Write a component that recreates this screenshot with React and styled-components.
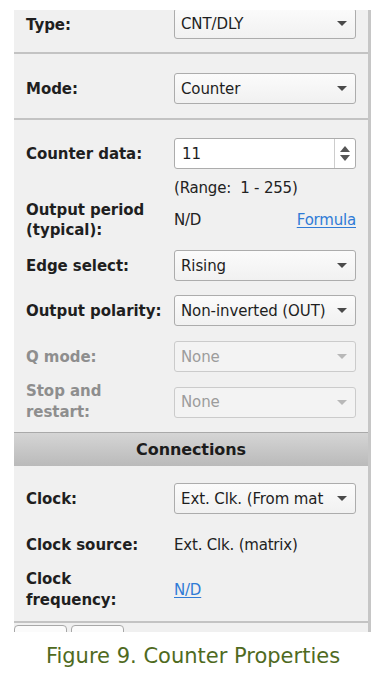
import React from "react";
import styled, { createGlobalStyle, css } from "styled-components";

const Global = createGlobalStyle`
  html, body { margin: 0; padding: 0; background: #ffffff; }
  body { width: 386px; height: 678px; overflow: hidden; font-family: "DejaVu Sans", Verdana, sans-serif; }
`;

const Page = styled.div`
  width: 386px;
  display: flex;
  flex-direction: column;
`;

const Frame = styled.div`
  margin-top: 10px;
  margin-left: 14px;
  width: 354px;
  border-right: 3px solid #c6c6c6;
  background: #f0f0f0;
  display: flex;
  flex-direction: column;
  overflow: hidden;
`;

const Section = styled.div`
  display: flex;
  flex-direction: column;
  padding: ${(p) => p.$pad || "0"};
  padding-left: 12px;
  padding-right: 12px;
  border-bottom: ${(p) => (p.$noline ? "none" : "2px solid #c3c3c3")};
`;

const Row = styled.div`
  display: grid;
  grid-template-columns: 148px 182px;
  align-items: center;
  margin-top: ${(p) => p.$mt || 0}px;
`;

const Label = styled.div`
  font-family: "DejaVu Sans", Verdana, sans-serif;
  font-weight: bold;
  font-size: 15px;
  line-height: ${(p) => p.$lh || 20}px;
  color: ${(p) => (p.$disabled ? "#8e8e8e" : "#1f1f1f")};
  letter-spacing: -0.05px;
`;

const Value = styled.div`
  font-family: "DejaVu Sans", Verdana, sans-serif;
  font-size: 15px;
  line-height: 20px;
  color: #222;
  display: flex;
  justify-content: space-between;
  align-items: center;
  letter-spacing: -0.2px;
`;

const Link = styled.span`
  color: #2f7bd6;
  text-decoration: underline;
  text-underline-offset: 2px;
`;

const Hint = styled.div`
  grid-column: 2;
  font-size: 15px;
  line-height: 18px;
  color: #222;
  letter-spacing: -0.2px;
  white-space: pre;
`;

const SelectBox = styled.div`
  height: 31px;
  box-sizing: border-box;
  border: 1px solid ${(p) => (p.$disabled ? "#cbcbcb" : "#acacac")};
  border-radius: 3px;
  background: ${(p) => (p.$disabled ? "#f3f3f3" : "linear-gradient(#fbfbfb, #f1f1f1)")};
  display: flex;
  align-items: center;
  padding: 0 8px 0 6px;
  margin-top: ${(p) => p.$mt || 0}px;
  font-size: 15px;
  letter-spacing: -0.1px;
  color: ${(p) => (p.$disabled ? "#9c9c9c" : "#1e1e1e")};
`;

const SelectText = styled.span`
  flex: 1;
  overflow: hidden;
  white-space: nowrap;
`;

const Arrow = styled.span`
  flex: none;
  width: 0;
  height: 0;
  margin-left: 4px;
  border-left: 5px solid transparent;
  border-right: 5px solid transparent;
  border-top: 5px solid ${(p) => (p.$disabled ? "#b8b8b8" : "#4a4a4a")};
`;

const Select = ({ value, disabled, mt }) => (
  <SelectBox $disabled={disabled} $mt={mt}>
    <SelectText>{value}</SelectText>
    <Arrow $disabled={disabled} />
  </SelectBox>
);

const SpinBox = styled.div`
  height: 31px;
  box-sizing: border-box;
  border: 1px solid #acacac;
  border-radius: 3px;
  background: #ffffff;
  display: flex;
  align-items: stretch;
  font-size: 15px;
  color: #1e1e1e;
`;

const SpinText = styled.span`
  flex: 1;
  padding-left: 7px;
  display: flex;
  align-items: center;
`;

const SpinButtons = styled.span`
  width: 20px;
  border-left: 1px solid #cdcdcd;
  display: flex;
  flex-direction: column;
  align-items: center;
  justify-content: center;
  gap: 3px;
`;

const tri = css`
  width: 0;
  height: 0;
  border-left: 5px solid transparent;
  border-right: 5px solid transparent;
`;

const Up = styled.span`
  ${tri}
  border-bottom: 6px solid #555;
`;
const Down = styled.span`
  ${tri}
  border-top: 6px solid #555;
`;

const Header = styled.div`
  height: 33px;
  border-top: 1px solid #a9a9a9;
  background: linear-gradient(#d5d5d5, #bababa);
  display: flex;
  align-items: center;
  justify-content: center;
  font-family: "DejaVu Sans", Verdana, sans-serif;
  font-weight: bold;
  font-size: 16px;
  color: #1c1c1c;
  letter-spacing: -0.1px;
`;

const Tabs = styled.div`
  display: flex;
  gap: 4px;
  padding-top: 2px;
  height: 7px;
`;

const Tab = styled.div`
  width: 53px;
  height: 12px;
  box-sizing: border-box;
  border: 1px solid #a8a8a8;
  border-radius: 4px 4px 0 0;
  background: #fbfbfb;
`;

const Caption = styled.div`
  margin-top: 11px;
  text-align: center;
  font-family: "DejaVu Sans", Verdana, sans-serif;
  font-size: 21px;
  line-height: 26px;
  color: #4f6a1e;
`;

export default function App() {
  return (
    <Page>
      <Global />
      <Frame>
        <Section $pad="0 0 13px">
          <Row>
            <Label>Type:</Label>
            <Select value="CNT/DLY" mt={-2} />
          </Row>
        </Section>
        <Section $pad="19px 0 14px">
          <Row>
            <Label>Mode:</Label>
            <Select value="Counter" />
          </Row>
        </Section>
        <Section $pad="18px 0 9px" $noline>
          <Row>
            <Label>Counter data:</Label>
            <SpinBox>
              <SpinText>11</SpinText>
              <SpinButtons>
                <Up />
                <Down />
              </SpinButtons>
            </SpinBox>
          </Row>
          <Row $mt={10}>
            <Hint>(Range:  1 - 255)</Hint>
          </Row>
          <Row $mt={3}>
            <Label>
              Output period
              <br />
              (typical):
            </Label>
            <Value>
              <span>N/D</span>
              <Link>Formula</Link>
            </Value>
          </Row>
          <Row $mt={10}>
            <Label>Edge select:</Label>
            <Select value="Rising" />
          </Row>
          <Row $mt={14}>
            <Label>Output polarity:</Label>
            <Select value="Non-inverted (OUT)" />
          </Row>
          <Row $mt={15}>
            <Label $disabled>Q mode:</Label>
            <Select value="None" disabled />
          </Row>
          <Row $mt={9}>
            <Label $disabled $lh={21}>
              Stop and
              <br />
              restart:
            </Label>
            <Select value="None" disabled />
          </Row>
        </Section>
        <Header>Connections</Header>
        <Section $pad="17px 0 10px">
          <Row>
            <Label>Clock:</Label>
            <Select value="Ext. Clk. (From mat" />
          </Row>
          <Row $mt={21}>
            <Label>Clock source:</Label>
            <Value>Ext. Clk. (matrix)</Value>
          </Row>
          <Row $mt={14}>
            <Label $lh={21}>
              Clock
              <br />
              frequency:
            </Label>
            <Value>
              <Link>N/D</Link>
            </Value>
          </Row>
        </Section>
        <Tabs>
          <Tab />
          <Tab />
        </Tabs>
      </Frame>
      <Caption>Figure 9. Counter Properties</Caption>
    </Page>
  );
}
